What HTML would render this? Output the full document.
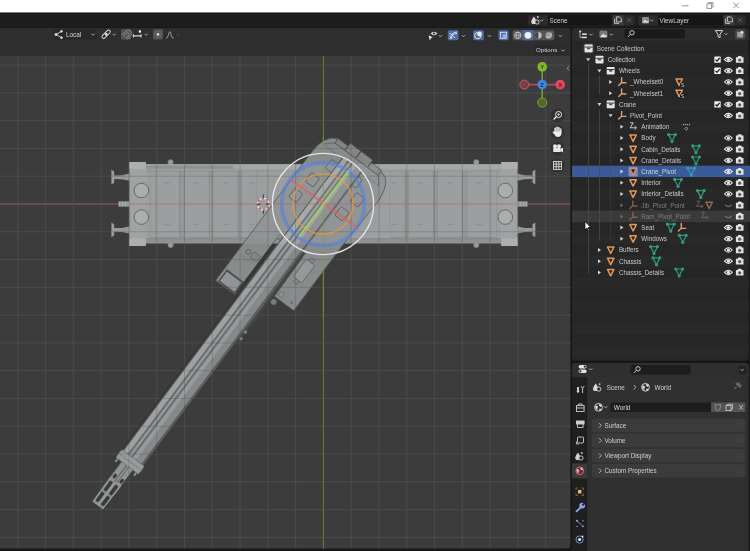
<!DOCTYPE html><html><head><meta charset="utf-8"><style>
html,body{margin:0;padding:0;background:#1a1a1a;overflow:hidden}
svg{display:block;will-change:transform}
text{font-family:"Liberation Sans", sans-serif;}
</style></head><body>
<svg width="750" height="551" viewBox="0 0 750 551">
<rect x="0" y="0" width="750" height="13" fill="#ffffff"/>
<rect x="0" y="12.5" width="750" height="1.2" fill="#0c0c0c"/>
<g stroke="#8a8a8a" stroke-width="0.9" fill="none"><line x1="682" y1="5.8" x2="688.5" y2="5.8"/><rect x="707" y="3.8" width="4.6" height="4.6"/><path d="M708.5 3.8 V2.6 H713 V7 H711.6"/><line x1="733.3" y1="2.6" x2="738.8" y2="8.2"/><line x1="738.8" y1="2.6" x2="733.3" y2="8.2"/></g>
<rect x="0" y="13.5" width="750" height="14.5" fill="#1d1d1d"/>
<rect x="0" y="27" width="750" height="1" fill="#161616"/>
<rect x="528" y="15.2" width="106.5" height="10.2" rx="2" fill="#2b2b2b"/>
<rect x="548" y="15.2" width="64.5" height="10.2" fill="#161616"/>
<rect x="612.5" y="15.2" width="11" height="10.2" fill="#3a3a3a"/>
<text x="549.5" y="22.6" font-size="6.4" fill="#d0d0d0" text-anchor="start" >Scene</text>
<g fill="none" stroke="#d0d0d0" stroke-width="0.9"><path d="M614.6 18.6 V23.4 H619.0"/><path d="M616.4 16.9 H619.6 L621.4 18.7 V21.9 H616.4 Z"/></g>
<g stroke="#6a6a6a" stroke-width="0.8"><line x1="626.8" y1="18" x2="631.2" y2="22.4"/><line x1="631.2" y1="18" x2="626.8" y2="22.4"/></g>
<path d="M540 19.6 l1.6 1.6 l1.6 -1.6" stroke="#c8c8c8" stroke-width="0.8" fill="none"/>
<g><path d="M534.0 16.4 q-2.8 3.4 -2.8 5 a2.6 2.6 0 0 0 5.2 0 q0 -1.6 -2.4 -5z" fill="#d8d8d8"/><circle cx="537.0" cy="22.0" r="2.1" fill="#2b2b2b" stroke="#d8d8d8" stroke-width="0.9"/><circle cx="537.8000000000001" cy="17.0" r="0.9" fill="#d8d8d8"/></g>
<rect x="638" y="15.2" width="107.5" height="10.2" rx="2" fill="#2b2b2b"/>
<rect x="658" y="15.2" width="65.5" height="10.2" fill="#161616"/>
<rect x="723.5" y="15.2" width="11" height="10.2" fill="#3a3a3a"/>
<text x="659.5" y="22.6" font-size="6.4" fill="#d0d0d0" text-anchor="start" >ViewLayer</text>
<g fill="none" stroke="#d0d0d0" stroke-width="0.9"><path d="M725.6 18.6 V23.4 H730.0"/><path d="M727.4 16.9 H730.6 L732.4 18.7 V21.9 H727.4 Z"/></g>
<g stroke="#6a6a6a" stroke-width="0.8"><line x1="737.8" y1="18" x2="742.2" y2="22.4"/><line x1="742.2" y1="18" x2="737.8" y2="22.4"/></g>
<path d="M650 19.6 l1.6 1.6 l1.6 -1.6" stroke="#c8c8c8" stroke-width="0.8" fill="none"/>
<g><rect x="642" y="17" width="7" height="6.5" rx="1" fill="#8a8a8a"/><path d="M642.5 22.5 l2.5 -3 l2 2 l1.5 -1 v2 z" fill="#e0e0e0"/></g>
<rect x="0" y="27" width="750" height="524" fill="#181818"/>
<rect x="-4" y="28" width="574.3" height="520.5" rx="3.5" fill="#3c3c3c"/>
<g stroke="#505050" stroke-width="1"><line x1="17.82" y1="56" x2="17.82" y2="548.5"/><line x1="45.60" y1="56" x2="45.60" y2="548.5"/><line x1="73.38" y1="56" x2="73.38" y2="548.5"/><line x1="101.16" y1="56" x2="101.16" y2="548.5"/><line x1="128.94" y1="56" x2="128.94" y2="548.5"/><line x1="156.72" y1="56" x2="156.72" y2="548.5"/><line x1="184.50" y1="56" x2="184.50" y2="548.5"/><line x1="212.28" y1="56" x2="212.28" y2="548.5"/><line x1="240.06" y1="56" x2="240.06" y2="548.5"/><line x1="267.84" y1="56" x2="267.84" y2="548.5"/><line x1="295.62" y1="56" x2="295.62" y2="548.5"/><line x1="351.18" y1="56" x2="351.18" y2="548.5"/><line x1="378.96" y1="56" x2="378.96" y2="548.5"/><line x1="406.74" y1="56" x2="406.74" y2="548.5"/><line x1="434.52" y1="56" x2="434.52" y2="548.5"/><line x1="462.30" y1="56" x2="462.30" y2="548.5"/><line x1="490.08" y1="56" x2="490.08" y2="548.5"/><line x1="517.86" y1="56" x2="517.86" y2="548.5"/><line x1="545.64" y1="56" x2="545.64" y2="548.5"/><line x1="0" y1="65.10" x2="570.5" y2="65.10"/><line x1="0" y1="92.88" x2="570.5" y2="92.88"/><line x1="0" y1="120.66" x2="570.5" y2="120.66"/><line x1="0" y1="148.44" x2="570.5" y2="148.44"/><line x1="0" y1="176.22" x2="570.5" y2="176.22"/><line x1="0" y1="231.78" x2="570.5" y2="231.78"/><line x1="0" y1="259.56" x2="570.5" y2="259.56"/><line x1="0" y1="287.34" x2="570.5" y2="287.34"/><line x1="0" y1="315.12" x2="570.5" y2="315.12"/><line x1="0" y1="342.90" x2="570.5" y2="342.90"/><line x1="0" y1="370.68" x2="570.5" y2="370.68"/><line x1="0" y1="398.46" x2="570.5" y2="398.46"/><line x1="0" y1="426.24" x2="570.5" y2="426.24"/><line x1="0" y1="454.02" x2="570.5" y2="454.02"/><line x1="0" y1="481.80" x2="570.5" y2="481.80"/><line x1="0" y1="509.58" x2="570.5" y2="509.58"/><line x1="0" y1="537.36" x2="570.5" y2="537.36"/></g>
<line x1="0" y1="204" x2="570.5" y2="204" stroke="#a05460" stroke-width="1.1"/>
<line x1="323.4" y1="56" x2="323.4" y2="548.5" stroke="#647e2c" stroke-width="1.1"/>
<g><path d="M129.5 173.6 L122 175.2 L114 175.39999999999998 L114 179.0 L122 179.2 L129.5 180.79999999999998 Z" fill="#969999"/><path d="M111.4 169.79999999999998 L114.2 171.6 L114.2 182.79999999999998 L111.4 184.6 Z" fill="#9a9d9d"/><path d="M517 173.6 L524.5 175.2 L532.5 175.39999999999998 L532.5 179.0 L524.5 179.2 L517 180.79999999999998 Z" fill="#969999"/><path d="M535.3 169.79999999999998 L532.5 171.6 L532.5 182.79999999999998 L535.3 184.6 Z" fill="#9a9d9d"/><path d="M129.5 226.3 L122 227.9 L114 228.1 L114 231.70000000000002 L122 231.9 L129.5 233.5 Z" fill="#969999"/><path d="M111.4 222.5 L114.2 224.3 L114.2 235.5 L111.4 237.3 Z" fill="#9a9d9d"/><path d="M517 226.3 L524.5 227.9 L532.5 228.1 L532.5 231.70000000000002 L524.5 231.9 L517 233.5 Z" fill="#969999"/><path d="M535.3 222.5 L532.5 224.3 L532.5 235.5 L535.3 237.3 Z" fill="#9a9d9d"/><rect x="118.5" y="201.4" width="11" height="5.2" fill="#a8aaaa"/><g stroke="#6a6a6a" stroke-width="0.5"><line x1="121" y1="201.4" x2="121" y2="206.6"/><line x1="124" y1="201.4" x2="124" y2="206.6"/><line x1="127" y1="201.4" x2="127" y2="206.6"/></g><rect x="516.5" y="201.4" width="11" height="5.2" fill="#a8aaaa"/><g stroke="#6a6a6a" stroke-width="0.5"><line x1="519" y1="201.4" x2="519" y2="206.6"/><line x1="522" y1="201.4" x2="522" y2="206.6"/><line x1="525" y1="201.4" x2="525" y2="206.6"/></g><circle cx="170.6" cy="162.3" r="2.7" fill="#9a9c9c" stroke="#727474" stroke-width="0.6"/><circle cx="170.6" cy="245" r="2.7" fill="#9a9c9c" stroke="#727474" stroke-width="0.6"/><circle cx="476.3" cy="162.3" r="2.7" fill="#9a9c9c" stroke="#727474" stroke-width="0.6"/><circle cx="476.3" cy="245" r="2.7" fill="#9a9c9c" stroke="#727474" stroke-width="0.6"/><rect x="144" y="164.3" width="358" height="79" fill="#9da0a0"/><rect x="144" y="164.3" width="358" height="4.6" fill="#a5a8a8"/><rect x="145" y="165.4" width="88" height="3.4" fill="#8f9292"/><rect x="150" y="171.5" width="340" height="63" fill="#9c9f9f"/><rect x="144" y="238.5" width="358" height="4.8" fill="#8f9292"/><rect x="129.3" y="162" width="16.4" height="84" fill="#a0a3a3"/><rect x="129.3" y="162" width="16.4" height="7" fill="#acafaf"/><rect x="129.3" y="238.5" width="16.4" height="7.5" fill="#acafaf"/><rect x="501.3" y="162" width="16.4" height="84" fill="#a0a3a3"/><rect x="501.3" y="162" width="16.4" height="7" fill="#acafaf"/><rect x="501.3" y="238.5" width="16.4" height="7.5" fill="#acafaf"/><rect x="179.6" y="171" width="4.599999999999994" height="66.4" fill="#959898"/><line x1="179.6" y1="171" x2="179.6" y2="237.4" stroke="#828585" stroke-width="0.7"/><line x1="184.2" y1="171" x2="184.2" y2="237.4" stroke="#868989" stroke-width="0.6"/><rect x="462.40000000000003" y="171" width="4.599999999999966" height="66.4" fill="#959898"/><line x1="462.40000000000003" y1="171" x2="462.40000000000003" y2="237.4" stroke="#828585" stroke-width="0.7"/><line x1="467.0" y1="171" x2="467.0" y2="237.4" stroke="#868989" stroke-width="0.6"/><rect x="209.4" y="171" width="3.5999999999999943" height="66.4" fill="#959898"/><line x1="209.4" y1="171" x2="209.4" y2="237.4" stroke="#828585" stroke-width="0.7"/><line x1="213" y1="171" x2="213" y2="237.4" stroke="#868989" stroke-width="0.6"/><rect x="433.6" y="171" width="3.6000000000000227" height="66.4" fill="#959898"/><line x1="433.6" y1="171" x2="433.6" y2="237.4" stroke="#828585" stroke-width="0.7"/><line x1="437.20000000000005" y1="171" x2="437.20000000000005" y2="237.4" stroke="#868989" stroke-width="0.6"/><rect x="238.2" y="171" width="3.4000000000000057" height="66.4" fill="#959898"/><line x1="238.2" y1="171" x2="238.2" y2="237.4" stroke="#828585" stroke-width="0.7"/><line x1="241.6" y1="171" x2="241.6" y2="237.4" stroke="#868989" stroke-width="0.6"/><rect x="405.0" y="171" width="3.400000000000034" height="66.4" fill="#959898"/><line x1="405.0" y1="171" x2="405.0" y2="237.4" stroke="#828585" stroke-width="0.7"/><line x1="408.40000000000003" y1="171" x2="408.40000000000003" y2="237.4" stroke="#868989" stroke-width="0.6"/><line x1="150" y1="171" x2="150" y2="237.4" stroke="#8e9191" stroke-width="0.6"/><line x1="155.2" y1="171" x2="155.2" y2="237.4" stroke="#8e9191" stroke-width="0.6"/><line x1="256.5" y1="171" x2="256.5" y2="237.4" stroke="#8e9191" stroke-width="0.6"/><line x1="390" y1="171" x2="390" y2="237.4" stroke="#8e9191" stroke-width="0.6"/><line x1="491.4" y1="171" x2="491.4" y2="237.4" stroke="#8e9191" stroke-width="0.6"/><line x1="496.6" y1="171" x2="496.6" y2="237.4" stroke="#8e9191" stroke-width="0.6"/><line x1="150" y1="237.4" x2="256.5" y2="237.4" stroke="#858888" stroke-width="0.7"/><line x1="390" y1="237.4" x2="496.6" y2="237.4" stroke="#858888" stroke-width="0.7"/><line x1="146" y1="171.2" x2="500" y2="171.2" stroke="#858888" stroke-width="0.6"/><line x1="146" y1="238.8" x2="500" y2="238.8" stroke="#7f8282" stroke-width="0.7"/><line x1="164" y1="183" x2="170" y2="183" stroke="#858888" stroke-width="0.6"/><line x1="164" y1="224.6" x2="170" y2="224.6" stroke="#858888" stroke-width="0.6"/><line x1="193" y1="183" x2="199" y2="183" stroke="#858888" stroke-width="0.6"/><line x1="193" y1="224.6" x2="199" y2="224.6" stroke="#858888" stroke-width="0.6"/><line x1="223" y1="183" x2="229" y2="183" stroke="#858888" stroke-width="0.6"/><line x1="223" y1="224.6" x2="229" y2="224.6" stroke="#858888" stroke-width="0.6"/><line x1="249" y1="183" x2="255" y2="183" stroke="#858888" stroke-width="0.6"/><line x1="249" y1="224.6" x2="255" y2="224.6" stroke="#858888" stroke-width="0.6"/><line x1="391" y1="183" x2="397" y2="183" stroke="#858888" stroke-width="0.6"/><line x1="391" y1="224.6" x2="397" y2="224.6" stroke="#858888" stroke-width="0.6"/><line x1="417" y1="183" x2="423" y2="183" stroke="#858888" stroke-width="0.6"/><line x1="417" y1="224.6" x2="423" y2="224.6" stroke="#858888" stroke-width="0.6"/><line x1="447" y1="183" x2="453" y2="183" stroke="#858888" stroke-width="0.6"/><line x1="447" y1="224.6" x2="453" y2="224.6" stroke="#858888" stroke-width="0.6"/><line x1="476" y1="183" x2="482" y2="183" stroke="#858888" stroke-width="0.6"/><line x1="476" y1="224.6" x2="482" y2="224.6" stroke="#858888" stroke-width="0.6"/><circle cx="141.4" cy="190.5" r="7.3" fill="#abaeae" stroke="#606262" stroke-width="0.9"/><circle cx="141.4" cy="217.1" r="7.3" fill="#abaeae" stroke="#606262" stroke-width="0.9"/><circle cx="505.3" cy="190.5" r="7.3" fill="#abaeae" stroke="#606262" stroke-width="0.9"/><circle cx="505.3" cy="217.1" r="7.3" fill="#abaeae" stroke="#606262" stroke-width="0.9"/></g>
<g transform="translate(323,204) rotate(-53.15)"><g opacity="0.9"><path d="M-125.5 -40 L30 -40.3 Q57 -41 61 -27 L60 30 Q59 40 37 42.6 L-18 40.4 L-103 40.6 L-103 16.5 L-55 15.5 L-55 -16.5 L-125 -16.5 Z" fill="#909494" stroke="#585b5b" stroke-width="0.9"/><rect x="56" y="-27" width="5.5" height="12" fill="#8c8e8e" stroke="#4e5050" stroke-width="0.8"/><rect x="56" y="-14.5" width="9" height="13.0" fill="#8c8e8e" stroke="#4e5050" stroke-width="0.8"/><rect x="56" y="-1" width="9" height="14.5" fill="#8c8e8e" stroke="#4e5050" stroke-width="0.8"/><rect x="56" y="14" width="6" height="13" fill="#8c8e8e" stroke="#4e5050" stroke-width="0.8"/><path d="M48 -36 L56 -27 M48 34 L56 27" stroke="#5e6060" stroke-width="0.7" fill="none"/><line x1="48" y1="-36" x2="48" y2="34" stroke="#6a6c6c" stroke-width="0.6"/><path d="M-124 -37 L-111 -37 L-111 -17.5 L-124 -17.5 Z" fill="#9a9e9e" stroke="#404343" stroke-width="1.1"/><line x1="-110" y1="-38.6" x2="-110" y2="-16.5" stroke="#5a5c5c" stroke-width="0.8"/><circle cx="-83" cy="-31" r="2.6" fill="#8e9090" stroke="#5e6060" stroke-width="0.7"/><rect x="-86.5" y="-26.5" width="7" height="8" rx="1" fill="#8e9090" stroke="#5e6060" stroke-width="0.7"/><line x1="-90" y1="-36" x2="-90" y2="-18" stroke="#7a7c7c" stroke-width="0.5"/><rect x="-76" y="19.8" width="22" height="10.6" rx="2.2" fill="#a0a4a4" stroke="#5e6262" stroke-width="0.7"/><rect x="-80" y="22.5" width="4" height="5" fill="#8e9090" stroke="#5e6060" stroke-width="0.6"/><rect x="-54" y="22.5" width="4" height="5" fill="#8e9090" stroke="#5e6060" stroke-width="0.6"/><rect x="-100" y="19" width="5" height="4" fill="#9a9c9c" stroke="#5e6060" stroke-width="0.6"/><circle cx="-98" cy="34" r="1.2" fill="#6a6c6c"/><rect x="-15.0" y="-32" width="11" height="10" rx="1.5" fill="#929494" stroke="#5a5c5c" stroke-width="0.9"/><rect x="7.5" y="-28" width="11" height="10" rx="1.5" fill="#929494" stroke="#5a5c5c" stroke-width="0.9"/><rect x="30.1" y="-20" width="11" height="10" rx="1.5" fill="#929494" stroke="#5a5c5c" stroke-width="0.9"/><rect x="-2.0" y="16" width="11" height="10" rx="1.5" fill="#929494" stroke="#5a5c5c" stroke-width="0.9"/><rect x="18.5" y="20" width="11" height="10" rx="1.5" fill="#929494" stroke="#5a5c5c" stroke-width="0.9"/><rect x="32.1" y="7" width="11" height="10" rx="1.5" fill="#929494" stroke="#5a5c5c" stroke-width="0.9"/><rect x="-122" y="-16.5" width="60" height="4" fill="#363737"/><rect x="-157" y="12.5" width="107" height="3.2" fill="#474848"/><circle cx="-52" cy="-14.8" r="2.2" fill="#8a8c8c" stroke="#5a5c5c" stroke-width="0.5"/><rect x="-318" y="-12.5" width="368" height="25" fill="#959999"/><rect x="-318" y="-12.5" width="368" height="1.2" fill="#545757"/><rect x="-318" y="-11.3" width="368" height="5" fill="#a8acac"/><rect x="-318" y="-6.3" width="368" height="2" fill="#6c7070"/><rect x="-318" y="-4.5" width="368" height="2.4" fill="#9da1a1"/><rect x="-318" y="-1.9" width="368" height="1.9" fill="#6c7070"/><rect x="-318" y="-0.1" width="368" height="4" fill="#a2a6a6"/><rect x="-318" y="3.9" width="368" height="6.6" fill="#8e9292"/><rect x="-318" y="10.5" width="368" height="2" fill="#606363"/><circle cx="-108" cy="19.3" r="3" fill="#7e8282" stroke="#5a5c5c" stroke-width="0.5"/><circle cx="-149" cy="14.8" r="1.6" fill="#8a8c8c"/><circle cx="-157" cy="15.2" r="1.6" fill="#8a8c8c"/><rect x="-318" y="-14.3" width="196" height="1.8" fill="#2e3030" opacity="0.55"/><path d="M-327 -13.6 Q-322 -14.6 -317 -13.6 L-317 14.2 Q-322 15.2 -327 14.2 Z" fill="#a2a6a6" stroke="#606464" stroke-width="0.6"/><line x1="-322" y1="-14.2" x2="-322" y2="14.8" stroke="#6e7272" stroke-width="0.6"/><rect x="-331" y="-12.6" width="4" height="2.2" rx="1" fill="#8e9292"/><rect x="-331" y="10.6" width="4" height="2.2" rx="1" fill="#8e9292"/><rect x="-347" y="-6.4" width="20" height="13.6" fill="#9a9e9e" stroke="#7a7e7e" stroke-width="0.6"/><rect x="-347" y="-1.2" width="20" height="1.4" fill="#6c7070"/><rect x="-347" y="1.6" width="20" height="1.2" fill="#6c7070"/><rect x="-345" y="-5" width="5" height="3" rx="1.2" fill="#3a3c3c"/><rect x="-345" y="3.6" width="5" height="3" rx="1.2" fill="#3a3c3c"/><path d="M-375.8 -5.6 L-347 -6.2 L-347 7.2 L-375.8 6.6 Z" fill="#8e9292" stroke="#a6aaaa" stroke-width="1"/><rect x="-375.8" y="-0.2" width="29" height="1.6" fill="#a6aaaa"/><rect x="-373.6" y="-4.4" width="11" height="3.4" rx="1" fill="#383a3a"/><rect x="-373.6" y="2.2" width="11" height="3.6" rx="1" fill="#383a3a"/><rect x="-360.4" y="-4.4" width="11.6" height="3.4" rx="1" fill="#383a3a"/><rect x="-360.4" y="2.2" width="11.6" height="3.6" rx="1" fill="#383a3a"/></g></g>
<g stroke="#3a3a3a" stroke-width="1" opacity="0.24"><line x1="17.82" y1="56" x2="17.82" y2="548.5"/><line x1="45.60" y1="56" x2="45.60" y2="548.5"/><line x1="73.38" y1="56" x2="73.38" y2="548.5"/><line x1="101.16" y1="56" x2="101.16" y2="548.5"/><line x1="128.94" y1="56" x2="128.94" y2="548.5"/><line x1="156.72" y1="56" x2="156.72" y2="548.5"/><line x1="184.50" y1="56" x2="184.50" y2="548.5"/><line x1="212.28" y1="56" x2="212.28" y2="548.5"/><line x1="240.06" y1="56" x2="240.06" y2="548.5"/><line x1="267.84" y1="56" x2="267.84" y2="548.5"/><line x1="295.62" y1="56" x2="295.62" y2="548.5"/><line x1="351.18" y1="56" x2="351.18" y2="548.5"/><line x1="378.96" y1="56" x2="378.96" y2="548.5"/><line x1="406.74" y1="56" x2="406.74" y2="548.5"/><line x1="434.52" y1="56" x2="434.52" y2="548.5"/><line x1="462.30" y1="56" x2="462.30" y2="548.5"/><line x1="490.08" y1="56" x2="490.08" y2="548.5"/><line x1="517.86" y1="56" x2="517.86" y2="548.5"/><line x1="545.64" y1="56" x2="545.64" y2="548.5"/><line x1="0" y1="65.10" x2="570.5" y2="65.10"/><line x1="0" y1="92.88" x2="570.5" y2="92.88"/><line x1="0" y1="120.66" x2="570.5" y2="120.66"/><line x1="0" y1="148.44" x2="570.5" y2="148.44"/><line x1="0" y1="176.22" x2="570.5" y2="176.22"/><line x1="0" y1="231.78" x2="570.5" y2="231.78"/><line x1="0" y1="259.56" x2="570.5" y2="259.56"/><line x1="0" y1="287.34" x2="570.5" y2="287.34"/><line x1="0" y1="315.12" x2="570.5" y2="315.12"/><line x1="0" y1="342.90" x2="570.5" y2="342.90"/><line x1="0" y1="370.68" x2="570.5" y2="370.68"/><line x1="0" y1="398.46" x2="570.5" y2="398.46"/><line x1="0" y1="426.24" x2="570.5" y2="426.24"/><line x1="0" y1="454.02" x2="570.5" y2="454.02"/><line x1="0" y1="481.80" x2="570.5" y2="481.80"/><line x1="0" y1="509.58" x2="570.5" y2="509.58"/><line x1="0" y1="537.36" x2="570.5" y2="537.36"/></g>
<line x1="129" y1="204" x2="517.5" y2="204" stroke="#b85a66" stroke-width="1.1" opacity="0.6"/>
<line x1="323.4" y1="136" x2="323.4" y2="318" stroke="#7f9a3a" stroke-width="1" opacity="0.6"/>
<g><circle cx="263.3" cy="204.2" r="5.8" fill="none" stroke="#f2e6e6" stroke-width="1.3" stroke-dasharray="2.3 2.25"/><circle cx="263.3" cy="204.2" r="5.8" fill="none" stroke="#c86a6a" stroke-width="1.3" stroke-dasharray="2.25 2.3" stroke-dashoffset="2.3"/><line x1="263.3" y1="194.5" x2="263.3" y2="198" stroke="#2a2a2a" stroke-width="0.9"/><line x1="263.3" y1="210.4" x2="263.3" y2="214" stroke="#2a2a2a" stroke-width="0.9"/><line x1="257" y1="204.2" x2="260.5" y2="204.2" stroke="#3a2a2a" stroke-width="0.9"/><line x1="266.1" y1="204.2" x2="269.6" y2="204.2" stroke="#3a2a2a" stroke-width="0.9"/></g>
<g fill="none"><circle cx="323" cy="204" r="50.6" stroke="#e4e4e4" stroke-width="1.4"/><circle cx="323" cy="204" r="41.4" stroke="#4f80e8" stroke-width="3.6" opacity="0.55"/><circle cx="323" cy="204" r="30" stroke="#f29a30" stroke-width="1.6" opacity="0.65"/><line x1="290.6" y1="179.6" x2="356.8" y2="227.5" stroke="#d8606e" stroke-width="2.6" opacity="0.6"/><line x1="298.8" y1="236.8" x2="348.6" y2="170.6" stroke="#a8dc60" stroke-width="2.6" opacity="0.62"/></g>
<path d="M0 28 H566.8 q3.5 0 3.5 3.5 V56 H0z" fill="#2e2e2e"/>
<rect x="53.5" y="29.2" width="43" height="10.6" rx="2" fill="#282828"/>
<g stroke="#d6d6d6" stroke-width="0.9" fill="#d6d6d6"><line x1="56" y1="34.5" x2="61.5" y2="31.3"/><line x1="56" y1="34.5" x2="61.5" y2="37.7"/><circle cx="56" cy="34.5" r="1.1"/><circle cx="61.5" cy="31.3" r="0.9"/><circle cx="61.5" cy="37.7" r="0.9"/></g>
<text x="66" y="37.0" font-size="6.4" fill="#d6d6d6" text-anchor="start" >Local</text>
<path d="M91.6 33.7 l1.6 1.6 l1.6 -1.6" stroke="#c8c8c8" stroke-width="0.8" fill="none"/>
<g fill="none" stroke="#d6d6d6" stroke-width="1"><rect x="101.6" y="34" width="6" height="3.4" rx="1.7" transform="rotate(-45 104.6 35.7)"/><rect x="104.6" y="31" width="6" height="3.4" rx="1.7" transform="rotate(-45 107.6 32.7)"/></g><circle cx="106.1" cy="34.2" r="0.8" fill="#ffffff"/>
<path d="M112.6 33.8 l1.6 1.6 l1.6 -1.6" stroke="#c8c8c8" stroke-width="0.8" fill="none"/>
<rect x="121" y="29.3" width="10" height="10.2" rx="1.5" fill="#555555"/>
<path d="M123.6 37.6 l2.6 -2.6 a1.6 1.6 0 0 1 2.3 2.3 l-2.6 2.6 M122.4 36.4 l3.8 -3.8 a3.3 3.3 0 0 1 4.7 4.7 l-3.8 3.8" stroke="#8e8e8e" stroke-width="0.9" fill="none" transform="translate(0,-1.6)"/>
<g stroke="#d6d6d6" stroke-width="1.1" fill="none"><path d="M133.4 34.2 v3.4 M133.4 35.9 h7.6 M141 34.2 v3.4"/></g><rect x="138.8" y="30.4" width="2.2" height="2.2" fill="#ffffff"/>
<path d="M144.6 33.8 l1.6 1.6 l1.6 -1.6" stroke="#c8c8c8" stroke-width="0.8" fill="none"/>
<rect x="153" y="29.3" width="10" height="10.2" rx="1.5" fill="#555555"/>
<circle cx="158" cy="34.4" r="3.2" fill="none" stroke="#7c7c7c" stroke-width="0.8" stroke-dasharray="1 0.6"/><circle cx="158" cy="34.4" r="1.3" fill="#e0e0e0"/>
<path d="M165.8 38.6 q2 -0.6 2.8 -4 q0.5 -3 1.2 -3 q0.7 0 1.2 3 q0.8 3.4 2.8 4" stroke="#a8a8a8" stroke-width="0.9" fill="none"/>
<path d="M176.6 33.8 l1.6 1.6 l1.6 -1.6" stroke="#555" stroke-width="0.8" fill="none"/>
<g><path d="M430.5 33.6 q3.5 -3.6 7 0 q-3.5 3.6 -7 0z" fill="#dcdcdc"/><circle cx="434" cy="33.6" r="1.1" fill="#2e2e2e"/><path d="M428.6 35.2 l4.2 2.2 l-1.8 0.6 l-1.2 2.4z" fill="#f0f0f0"/></g>
<path d="M438.8 35.2 l1.6 1.6 l1.6 -1.6" stroke="#c8c8c8" stroke-width="0.8" fill="none"/>
<rect x="447.8" y="30.3" width="10.6" height="10" rx="1.5" fill="#4e6ea8"/>
<path d="M450 39 a7 7 0 0 1 7 -7 M451.5 39 a5 5 0 0 1 5.5 -5.5 M449.8 33 l5 5" stroke="#e8e8e8" stroke-width="0.9" fill="none"/>
<path d="M461.8 35.2 l1.6 1.6 l1.6 -1.6" stroke="#c8c8c8" stroke-width="0.8" fill="none"/>
<rect x="473.2" y="30.3" width="10.6" height="10" rx="1.5" fill="#4e6ea8"/>
<circle cx="477.8" cy="35.6" r="3.2" fill="none" stroke="#e8e8e8" stroke-width="0.9"/><circle cx="479.5" cy="34" r="2.4" fill="#e8e8e8"/>
<path d="M487.8 35.2 l1.6 1.6 l1.6 -1.6" stroke="#c8c8c8" stroke-width="0.8" fill="none"/>
<rect x="498.4" y="30.3" width="10.2" height="10" rx="1.5" fill="#4e6ea8"/>
<rect x="500.5" y="32.3" width="6" height="6" fill="none" stroke="#e8e8e8" stroke-width="0.8"/><rect x="502.5" y="34.3" width="4" height="4" fill="#8fb0e0"/>
<rect x="512.6" y="30.3" width="41.8" height="10" rx="2" fill="#545454"/>
<rect x="522.8" y="30.3" width="10.4" height="10" fill="#4e6ea8"/>
<circle cx="517.8" cy="35.3" r="3.2" fill="none" stroke="#d8d8d8" stroke-width="0.8"/><line x1="514.6" y1="35.3" x2="521" y2="35.3" stroke="#d8d8d8" stroke-width="0.6"/><ellipse cx="517.8" cy="35.3" rx="1.3" ry="3.2" fill="none" stroke="#d8d8d8" stroke-width="0.6"/>
<circle cx="528" cy="35.3" r="3.4" fill="#f2f2f2"/>
<circle cx="538.3" cy="35.3" r="3.4" fill="#bdbdbd"/><path d="M538.3 31.9 a3.4 3.4 0 0 0 0 6.8z" fill="#444"/>
<circle cx="548.8" cy="35.3" r="3.4" fill="#9a9a9a"/><path d="M546 37 a3.4 3.4 0 0 0 5 -3.6" fill="none" stroke="#e0e0e0" stroke-width="0.8"/>
<path d="M558.8 35.2 l1.6 1.6 l1.6 -1.6" stroke="#c8c8c8" stroke-width="0.8" fill="none"/>
<rect x="533.5" y="45" width="33" height="10" rx="2" fill="#2a2a2a"/>
<text x="536" y="52.4" font-size="6.2" fill="#d0d0d0" text-anchor="start" >Options</text>
<path d="M561.5 49.6 l1.6 1.6 l1.6 -1.6" stroke="#c8c8c8" stroke-width="0.8" fill="none"/>
<g><line x1="542.2" y1="66.8" x2="542.2" y2="102.6" stroke="#71a02a" stroke-width="1.6"/><line x1="524.3" y1="84.6" x2="560.2" y2="84.6" stroke="#b84a5a" stroke-width="1.6"/><circle cx="524.3" cy="84.6" r="4.5" fill="#7a3e4a" stroke="#c25a6c" stroke-width="1"/><circle cx="542.2" cy="102.6" r="4.5" fill="#4e6a26" stroke="#7ca63a" stroke-width="1"/><circle cx="560.2" cy="84.6" r="4.8" fill="#df4a5e"/><circle cx="542.2" cy="66.8" r="4.8" fill="#7fb92a"/><circle cx="542.2" cy="84.6" r="4.8" fill="#3f86e0"/></g>
<g font-size="5.4" font-weight="bold" text-anchor="middle"><text x="542.2" y="68.8" fill="#2a3a10">Y</text><text x="560.2" y="86.6" fill="#5a1520">X</text><text x="542.2" y="86.6" fill="#10305a">Z</text></g>
<path d="M569 66.4 l-1.8 2 l1.8 2" stroke="#bdbdbd" stroke-width="0.8" fill="none"/>
<circle cx="557.5" cy="115.6" r="7" fill="#2f2f2f" opacity="0.85"/>
<circle cx="557.5" cy="132.2" r="7" fill="#2f2f2f" opacity="0.85"/>
<circle cx="557.5" cy="148.8" r="7" fill="#2f2f2f" opacity="0.85"/>
<circle cx="557.5" cy="165.4" r="7" fill="#2f2f2f" opacity="0.85"/>
<g fill="none" stroke="#e8e8e8" stroke-width="1"><circle cx="558.6" cy="114.5" r="3"/><line x1="556.5" y1="116.6" x2="553.6" y2="119.5" stroke-width="1.4"/><path d="M557.2 114.5 h2.8 M558.6 113.1 v2.8" stroke-width="0.7"/></g>
<g fill="#ececec"><rect x="554.4" y="127.6" width="1.5" height="5" rx="0.75"/><rect x="556.3" y="126.6" width="1.5" height="5.5" rx="0.75"/><rect x="558.2" y="127" width="1.5" height="5.5" rx="0.75"/><rect x="560.1" y="128.2" width="1.4" height="4.5" rx="0.7"/><path d="M554.4 131.5 h7.1 v2.2 q-0.5 3 -3.6 3.2 q-2.4 0 -3.2 -2.2 l-2.4 -2.6 q0.4 -1 1.6 -0.4z"/></g>
<g fill="#e8e8e8"><circle cx="555" cy="146.2" r="2"/><circle cx="559" cy="146.2" r="2"/><rect x="553.2" y="148" width="7.5" height="4" rx="0.6"/><path d="M560.5 149 l2.5 -1.5 v5 l-2.5 -1.5z"/></g>
<g fill="none" stroke="#e8e8e8" stroke-width="0.8"><rect x="553.5" y="161.4" width="8" height="8"/><path d="M556.2 161.4 v8 M558.8 161.4 v8 M553.5 164.1 h8 M553.5 166.7 h8"/></g>
<rect x="572" y="28" width="176.6" height="332.8" rx="3.5" fill="#262626"/>
<rect x="572" y="54.0" width="176.6" height="11.2" fill="#292929"/>
<rect x="572" y="76.4" width="176.6" height="11.2" fill="#292929"/>
<rect x="572" y="98.8" width="176.6" height="11.2" fill="#292929"/>
<rect x="572" y="121.2" width="176.6" height="11.2" fill="#292929"/>
<rect x="572" y="143.6" width="176.6" height="11.2" fill="#292929"/>
<rect x="572" y="166.0" width="176.6" height="11.2" fill="#292929"/>
<rect x="572" y="188.4" width="176.6" height="11.2" fill="#292929"/>
<rect x="572" y="210.8" width="176.6" height="11.2" fill="#292929"/>
<rect x="572" y="233.2" width="176.6" height="11.2" fill="#292929"/>
<rect x="572" y="255.6" width="176.6" height="11.2" fill="#292929"/>
<rect x="572" y="278.0" width="176.6" height="11.2" fill="#292929"/>
<rect x="572" y="300.4" width="176.6" height="11.2" fill="#292929"/>
<rect x="572" y="322.8" width="176.6" height="11.2" fill="#292929"/>
<rect x="572" y="345.2" width="176.6" height="11.2" fill="#292929"/>
<path d="M572 31.5 q0 -3.5 3.5 -3.5 H745.1 q3.5 0 3.5 3.5 V40.8 H572z" fill="#2c2c2c"/>
<g fill="#d8d8d8"><rect x="579.2" y="30.6" width="2" height="1.6"/><rect x="582" y="33.4" width="4.8" height="1.6"/><rect x="582" y="36.6" width="4.8" height="1.6"/><path d="M580 32 v5.4 h2" stroke="#d8d8d8" stroke-width="0.7" fill="none"/></g>
<path d="M589.6 33.8 l1.5 1.5 l1.5 -1.5" stroke="#c8c8c8" stroke-width="0.8" fill="none"/>
<rect x="599.4" y="30.6" width="8" height="7.4" rx="1.5" fill="#777"/><path d="M600.2 37 l3 -3.6 l2 2 l1.4 -1 v2.6z" fill="#e0e0e0"/>
<path d="M609.8 33.8 l1.5 1.5 l1.5 -1.5" stroke="#c8c8c8" stroke-width="0.8" fill="none"/>
<rect x="624.5" y="29" width="60.5" height="9.6" rx="2" fill="#1a1a1a"/>
<g fill="none" stroke="#d8d8d8" stroke-width="0.9"><circle cx="632" cy="32.8" r="2.2"/><line x1="630.4" y1="34.4" x2="627.8" y2="37"/></g>
<path d="M715.3 30.6 h7.4 l-2.7 3.6 v3.6 l-2 -1.2 v-2.4z" fill="none" stroke="#d8d8d8" stroke-width="1"/>
<path d="M724.4 33.3 l1.5 1.5 l1.5 -1.5" stroke="#c8c8c8" stroke-width="0.8" fill="none"/>
<rect x="735.2" y="29.6" width="10" height="9.6" rx="1.5" fill="#4a4a4a"/><rect x="737.2" y="31.8" width="6" height="5.6" rx="0.8" fill="#9a9a9a"/><circle cx="742" cy="32.4" r="1.4" fill="#e0e0e0"/>
<rect x="572" y="165.7" width="178" height="11.4" fill="#3b5a9a"/>
<rect x="572" y="210.5" width="178" height="11.6" fill="#3a3a3a"/>
<line x1="588.5" y1="64.6" x2="588.5" y2="274.4" stroke="#4a4a4a" stroke-width="0.8"/>
<line x1="599.5" y1="75.8" x2="599.5" y2="94.2" stroke="#4a4a4a" stroke-width="0.8"/>
<line x1="599.5" y1="109.4" x2="599.5" y2="240.8" stroke="#4a4a4a" stroke-width="0.8"/>
<line x1="610.5" y1="120.6" x2="610.5" y2="240.8" stroke="#4a4a4a" stroke-width="0.8" stroke-dasharray="1.4 1.4"/>
<rect x="583.6" y="43.6" width="10" height="9.6" rx="1.5" fill="#4a4a4a"/>
<g><rect x="584.6" y="44.6" width="8" height="7.6" rx="0.8" fill="#e6e6e6"/><rect x="584.6" y="46.6" width="8" height="0.9" fill="#2a2a2a"/><rect x="587.0" y="47.5" width="3.2" height="1.8" fill="#555"/></g>
<text x="596.8000000000001" y="50.699999999999996" font-size="6.3" fill="#c9c9c9" text-anchor="start" >Scene Collection</text>
<path d="M586.2 58.199999999999996 h4 l-2 3z" fill="#d0d0d0"/>
<g><rect x="595.5" y="55.8" width="8" height="7.6" rx="0.8" fill="#e6e6e6"/><rect x="595.5" y="57.8" width="8" height="0.9" fill="#2a2a2a"/><rect x="597.9" y="58.699999999999996" width="3.2" height="1.8" fill="#555"/></g>
<text x="607.7" y="61.89999999999999" font-size="6.3" fill="#c9c9c9" text-anchor="start" >Collection</text>
<rect x="714.3" y="56.39999999999999" width="6.4" height="6.4" rx="0.6" fill="#f0f0f0"/><path d="M715.5 59.699999999999996 l1.5 1.5 l2.7 -3.2" stroke="#1a1a1a" stroke-width="1.2" fill="none"/>
<path d="M724.5 59.599999999999994 q3.9 -4.4 7.8 0 q-3.9 4.4 -7.8 0z" fill="none" stroke="#e6e6e6" stroke-width="1.1"/><circle cx="728.4" cy="59.599999999999994" r="1.6" fill="#e6e6e6"/>
<path d="M735.9000000000001 57.199999999999996 h1.6 l0.8 -1.3 h2.8 l0.8 1.3 h1.6 v5.6 h-7.6z" fill="#e2e2e2"/><circle cx="739.7" cy="59.99999999999999" r="1.6" fill="#5a5a5a"/>
<path d="M597.4 69.39999999999999 h4 l-2 3z" fill="#d0d0d0"/>
<g><rect x="606.6999999999999" y="67.0" width="8" height="7.6" rx="0.8" fill="#e6e6e6"/><rect x="606.6999999999999" y="69.0" width="8" height="0.9" fill="#2a2a2a"/><rect x="609.0999999999999" y="69.89999999999999" width="3.2" height="1.8" fill="#555"/></g>
<text x="618.9" y="73.1" font-size="6.3" fill="#c9c9c9" text-anchor="start" >Wheels</text>
<rect x="714.3" y="67.6" width="6.4" height="6.4" rx="0.6" fill="#f0f0f0"/><path d="M715.5 70.89999999999999 l1.5 1.5 l2.7 -3.2" stroke="#1a1a1a" stroke-width="1.2" fill="none"/>
<path d="M724.5 70.8 q3.9 -4.4 7.8 0 q-3.9 4.4 -7.8 0z" fill="none" stroke="#e6e6e6" stroke-width="1.1"/><circle cx="728.4" cy="70.8" r="1.6" fill="#e6e6e6"/>
<path d="M735.9000000000001 68.39999999999999 h1.6 l0.8 -1.3 h2.8 l0.8 1.3 h1.6 v5.6 h-7.6z" fill="#e2e2e2"/><circle cx="739.7" cy="71.2" r="1.6" fill="#5a5a5a"/>
<path d="M609.2 80.0 v4 l3 -2z" fill="#d8d8d8"/>
<path d="M621.6 82.6 V77.8 M621.6 82.6 L618.6999999999999 85.4 M621.6 82.6 L625.9 82.8" stroke="#dca070" stroke-width="1.4" fill="none" stroke-linecap="round"/>
<text x="630.1" y="84.3" font-size="6.3" fill="#c9c9c9" text-anchor="start" >_Wheelset0</text>
<path d="M676.0 79.0 H682.4000000000001 L679.2 85.4Z" fill="#3a2010" stroke="#d99a64" stroke-width="1.5" stroke-linejoin="round"/><circle cx="682.6" cy="84.6" r="2.6" fill="#161616"/><text x="682.6" y="86.6" font-size="5.6" fill="#d8d8d8" text-anchor="middle">S</text>
<path d="M724.5 82.0 q3.9 -4.4 7.8 0 q-3.9 4.4 -7.8 0z" fill="none" stroke="#e6e6e6" stroke-width="1.1"/><circle cx="728.4" cy="82.0" r="1.6" fill="#e6e6e6"/>
<path d="M735.9000000000001 79.6 h1.6 l0.8 -1.3 h2.8 l0.8 1.3 h1.6 v5.6 h-7.6z" fill="#e2e2e2"/><circle cx="739.7" cy="82.4" r="1.6" fill="#5a5a5a"/>
<path d="M609.2 91.19999999999999 v4 l3 -2z" fill="#d8d8d8"/>
<path d="M621.6 93.79999999999998 V88.99999999999999 M621.6 93.79999999999998 L618.6999999999999 96.6 M621.6 93.79999999999998 L625.9 93.99999999999999" stroke="#dca070" stroke-width="1.4" fill="none" stroke-linecap="round"/>
<text x="630.1" y="95.49999999999999" font-size="6.3" fill="#c9c9c9" text-anchor="start" >_Wheelset1</text>
<path d="M676.0 90.19999999999999 H682.4000000000001 L679.2 96.6Z" fill="#3a2010" stroke="#d99a64" stroke-width="1.5" stroke-linejoin="round"/><circle cx="682.6" cy="95.79999999999998" r="2.6" fill="#161616"/><text x="682.6" y="97.79999999999998" font-size="5.6" fill="#d8d8d8" text-anchor="middle">S</text>
<path d="M724.5 93.19999999999999 q3.9 -4.4 7.8 0 q-3.9 4.4 -7.8 0z" fill="none" stroke="#e6e6e6" stroke-width="1.1"/><circle cx="728.4" cy="93.19999999999999" r="1.6" fill="#e6e6e6"/>
<path d="M735.9000000000001 90.79999999999998 h1.6 l0.8 -1.3 h2.8 l0.8 1.3 h1.6 v5.6 h-7.6z" fill="#e2e2e2"/><circle cx="739.7" cy="93.6" r="1.6" fill="#5a5a5a"/>
<path d="M597.4 103.0 h4 l-2 3z" fill="#d0d0d0"/>
<g><rect x="606.6999999999999" y="100.60000000000001" width="8" height="7.6" rx="0.8" fill="#e6e6e6"/><rect x="606.6999999999999" y="102.60000000000001" width="8" height="0.9" fill="#2a2a2a"/><rect x="609.0999999999999" y="103.5" width="3.2" height="1.8" fill="#555"/></g>
<text x="618.9" y="106.7" font-size="6.3" fill="#c9c9c9" text-anchor="start" >Crane</text>
<rect x="714.3" y="101.2" width="6.4" height="6.4" rx="0.6" fill="#f0f0f0"/><path d="M715.5 104.5 l1.5 1.5 l2.7 -3.2" stroke="#1a1a1a" stroke-width="1.2" fill="none"/>
<path d="M724.5 104.4 q3.9 -4.4 7.8 0 q-3.9 4.4 -7.8 0z" fill="none" stroke="#e6e6e6" stroke-width="1.1"/><circle cx="728.4" cy="104.4" r="1.6" fill="#e6e6e6"/>
<path d="M735.9000000000001 102.0 h1.6 l0.8 -1.3 h2.8 l0.8 1.3 h1.6 v5.6 h-7.6z" fill="#e2e2e2"/><circle cx="739.7" cy="104.80000000000001" r="1.6" fill="#5a5a5a"/>
<path d="M608.6 114.19999999999999 h4 l-2 3z" fill="#d0d0d0"/>
<path d="M621.6 116.19999999999999 V111.39999999999999 M621.6 116.19999999999999 L618.6999999999999 119.0 M621.6 116.19999999999999 L625.9 116.39999999999999" stroke="#dca070" stroke-width="1.4" fill="none" stroke-linecap="round"/>
<text x="630.1" y="117.89999999999999" font-size="6.3" fill="#c9c9c9" text-anchor="start" >Pivot_Point</text>
<path d="M724.5 115.6 q3.9 -4.4 7.8 0 q-3.9 4.4 -7.8 0z" fill="none" stroke="#e6e6e6" stroke-width="1.1"/><circle cx="728.4" cy="115.6" r="1.6" fill="#e6e6e6"/>
<path d="M735.9000000000001 113.19999999999999 h1.6 l0.8 -1.3 h2.8 l0.8 1.3 h1.6 v5.6 h-7.6z" fill="#e2e2e2"/><circle cx="739.7" cy="116.0" r="1.6" fill="#5a5a5a"/>
<path d="M620.4 124.79999999999998 v4 l3 -2z" fill="#d8d8d8"/>
<path d="M630.0999999999999 122.79999999999998 h3.2 l-3.2 5 h6.2 M634.6999999999999 125.99999999999999 l1.8 1.8 l-1.8 1.8" stroke="#d8d8d8" stroke-width="0.9" fill="none" stroke-linejoin="round"/>
<text x="641.3" y="129.1" font-size="6.3" fill="#c9c9c9" text-anchor="start" >Animation</text>
<g fill="#bdbdbd"><circle cx="683.4" cy="124.59999999999998" r="0.7"/><circle cx="685.4" cy="124.59999999999998" r="0.7"/><circle cx="687.4" cy="124.59999999999998" r="0.7"/><circle cx="689.4" cy="124.59999999999998" r="0.7"/></g><path d="M686.4 126.99999999999999 l1.6 1.6 l-1.6 1.6 l-1.6 -1.6z" fill="none" stroke="#bdbdbd" stroke-width="0.7"/>
<path d="M620.4 136.0 v4 l3 -2z" fill="#d8d8d8"/>
<path d="M629.8999999999999 135.0 H636.3 L633.0999999999999 141.4Z" fill="#3a2010" stroke="#d99a64" stroke-width="1.5" stroke-linejoin="round"/>
<text x="641.3" y="140.3" font-size="6.3" fill="#c9c9c9" text-anchor="start" >Body</text>
<g stroke="#2f9c7a" stroke-width="1.2" fill="none"><path d="M668.6 134.6 L675.4 134.6 L672 141.6Z"/><circle cx="668.6" cy="134.6" r="1" fill="#2f9c7a"/><circle cx="675.4" cy="134.6" r="1" fill="#2f9c7a"/><circle cx="672" cy="141.6" r="1" fill="#2f9c7a"/></g>
<path d="M724.5 138.0 q3.9 -4.4 7.8 0 q-3.9 4.4 -7.8 0z" fill="none" stroke="#e6e6e6" stroke-width="1.1"/><circle cx="728.4" cy="138.0" r="1.6" fill="#e6e6e6"/>
<path d="M735.9000000000001 135.6 h1.6 l0.8 -1.3 h2.8 l0.8 1.3 h1.6 v5.6 h-7.6z" fill="#e2e2e2"/><circle cx="739.7" cy="138.4" r="1.6" fill="#5a5a5a"/>
<path d="M620.4 147.2 v4 l3 -2z" fill="#d8d8d8"/>
<path d="M629.8999999999999 146.2 H636.3 L633.0999999999999 152.6Z" fill="#3a2010" stroke="#d99a64" stroke-width="1.5" stroke-linejoin="round"/>
<text x="641.3" y="151.5" font-size="6.3" fill="#c9c9c9" text-anchor="start" >Cabin_Details</text>
<g stroke="#2f9c7a" stroke-width="1.2" fill="none"><path d="M692.6 145.79999999999998 L699.4 145.79999999999998 L696 152.79999999999998Z"/><circle cx="692.6" cy="145.79999999999998" r="1" fill="#2f9c7a"/><circle cx="699.4" cy="145.79999999999998" r="1" fill="#2f9c7a"/><circle cx="696" cy="152.79999999999998" r="1" fill="#2f9c7a"/></g>
<path d="M724.5 149.2 q3.9 -4.4 7.8 0 q-3.9 4.4 -7.8 0z" fill="none" stroke="#e6e6e6" stroke-width="1.1"/><circle cx="728.4" cy="149.2" r="1.6" fill="#e6e6e6"/>
<path d="M735.9000000000001 146.79999999999998 h1.6 l0.8 -1.3 h2.8 l0.8 1.3 h1.6 v5.6 h-7.6z" fill="#e2e2e2"/><circle cx="739.7" cy="149.6" r="1.6" fill="#5a5a5a"/>
<path d="M620.4 158.4 v4 l3 -2z" fill="#d8d8d8"/>
<path d="M629.8999999999999 157.4 H636.3 L633.0999999999999 163.8Z" fill="#3a2010" stroke="#d99a64" stroke-width="1.5" stroke-linejoin="round"/>
<text x="641.3" y="162.70000000000002" font-size="6.3" fill="#c9c9c9" text-anchor="start" >Crane_Details</text>
<g stroke="#2f9c7a" stroke-width="1.2" fill="none"><path d="M692.6 157.0 L699.4 157.0 L696 164.0Z"/><circle cx="692.6" cy="157.0" r="1" fill="#2f9c7a"/><circle cx="699.4" cy="157.0" r="1" fill="#2f9c7a"/><circle cx="696" cy="164.0" r="1" fill="#2f9c7a"/></g>
<path d="M724.5 160.4 q3.9 -4.4 7.8 0 q-3.9 4.4 -7.8 0z" fill="none" stroke="#e6e6e6" stroke-width="1.1"/><circle cx="728.4" cy="160.4" r="1.6" fill="#e6e6e6"/>
<path d="M735.9000000000001 158.0 h1.6 l0.8 -1.3 h2.8 l0.8 1.3 h1.6 v5.6 h-7.6z" fill="#e2e2e2"/><circle cx="739.7" cy="160.8" r="1.6" fill="#5a5a5a"/>
<path d="M620.4 169.6 v4 l3 -2z" fill="#d8d8d8"/>
<rect x="628.4999999999999" y="166.79999999999998" width="9.2" height="9.6" rx="1.2" fill="#7a8fb8"/><path d="M629.8999999999999 168.6 H636.3 L633.0999999999999 175.0Z" fill="#3a2010" stroke="#d08a7a" stroke-width="1.5" stroke-linejoin="round"/>
<text x="641.3" y="173.9" font-size="6.3" fill="#d6d6d6" text-anchor="start" >Crane_Pivot</text>
<g stroke="#3a98b4" stroke-width="1.2" fill="none"><path d="M687.8000000000001 168.2 L694.6 168.2 L691.2 175.2Z"/><circle cx="687.8000000000001" cy="168.2" r="1" fill="#3a98b4"/><circle cx="694.6" cy="168.2" r="1" fill="#3a98b4"/><circle cx="691.2" cy="175.2" r="1" fill="#3a98b4"/></g>
<path d="M724.5 171.6 q3.9 -4.4 7.8 0 q-3.9 4.4 -7.8 0z" fill="none" stroke="#e6e6e6" stroke-width="1.1"/><circle cx="728.4" cy="171.6" r="1.6" fill="#e6e6e6"/>
<path d="M735.9000000000001 169.2 h1.6 l0.8 -1.3 h2.8 l0.8 1.3 h1.6 v5.6 h-7.6z" fill="#e2e2e2"/><circle cx="739.7" cy="172.0" r="1.6" fill="#5a5a5a"/>
<path d="M620.4 180.79999999999998 v4 l3 -2z" fill="#d8d8d8"/>
<path d="M629.8999999999999 179.79999999999998 H636.3 L633.0999999999999 186.2Z" fill="#3a2010" stroke="#d99a64" stroke-width="1.5" stroke-linejoin="round"/>
<text x="641.3" y="185.1" font-size="6.3" fill="#c9c9c9" text-anchor="start" >Interior</text>
<g stroke="#2f9c7a" stroke-width="1.2" fill="none"><path d="M674.6 179.39999999999998 L681.4 179.39999999999998 L678 186.39999999999998Z"/><circle cx="674.6" cy="179.39999999999998" r="1" fill="#2f9c7a"/><circle cx="681.4" cy="179.39999999999998" r="1" fill="#2f9c7a"/><circle cx="678" cy="186.39999999999998" r="1" fill="#2f9c7a"/></g>
<path d="M724.5 182.79999999999998 q3.9 -4.4 7.8 0 q-3.9 4.4 -7.8 0z" fill="none" stroke="#e6e6e6" stroke-width="1.1"/><circle cx="728.4" cy="182.79999999999998" r="1.6" fill="#e6e6e6"/>
<path d="M735.9000000000001 180.39999999999998 h1.6 l0.8 -1.3 h2.8 l0.8 1.3 h1.6 v5.6 h-7.6z" fill="#e2e2e2"/><circle cx="739.7" cy="183.2" r="1.6" fill="#5a5a5a"/>
<path d="M620.4 192.0 v4 l3 -2z" fill="#d8d8d8"/>
<path d="M629.8999999999999 191.0 H636.3 L633.0999999999999 197.4Z" fill="#3a2010" stroke="#d99a64" stroke-width="1.5" stroke-linejoin="round"/>
<text x="641.3" y="196.3" font-size="6.3" fill="#c9c9c9" text-anchor="start" >Interior_Details</text>
<g stroke="#2f9c7a" stroke-width="1.2" fill="none"><path d="M697.4 190.6 L704.1999999999999 190.6 L700.8 197.6Z"/><circle cx="697.4" cy="190.6" r="1" fill="#2f9c7a"/><circle cx="704.1999999999999" cy="190.6" r="1" fill="#2f9c7a"/><circle cx="700.8" cy="197.6" r="1" fill="#2f9c7a"/></g>
<path d="M724.5 194.0 q3.9 -4.4 7.8 0 q-3.9 4.4 -7.8 0z" fill="none" stroke="#e6e6e6" stroke-width="1.1"/><circle cx="728.4" cy="194.0" r="1.6" fill="#e6e6e6"/>
<path d="M735.9000000000001 191.6 h1.6 l0.8 -1.3 h2.8 l0.8 1.3 h1.6 v5.6 h-7.6z" fill="#e2e2e2"/><circle cx="739.7" cy="194.4" r="1.6" fill="#5a5a5a"/>
<path d="M620.4 203.2 v4 l3 -2z" fill="#6a6a6a"/>
<path d="M632.8 205.79999999999998 V201.0 M632.8 205.79999999999998 L629.8999999999999 208.6 M632.8 205.79999999999998 L637.0999999999999 206.0" stroke="#7a6050" stroke-width="1.4" fill="none" stroke-linecap="round"/>
<text x="641.3" y="207.5" font-size="6.3" fill="#808080" text-anchor="start" >Jib_Pivot_Point</text>
<path d="M696.6 201.2 h3.2 l-3.2 5 h6.2 M701.2 204.39999999999998 l1.8 1.8 l-1.8 1.8" stroke="#6a6a6a" stroke-width="0.9" fill="none" stroke-linejoin="round"/>
<path d="M706.0 202.2 H712.4000000000001 L709.2 208.6Z" fill="#3a2010" stroke="#8a6a50" stroke-width="1.5" stroke-linejoin="round"/>
<path d="M725.0 204.79999999999998 q3.4 3.2 6.8 0" stroke="#8a8a8a" stroke-width="1" fill="none"/>
<path d="M735.9000000000001 202.79999999999998 h1.6 l0.8 -1.3 h2.8 l0.8 1.3 h1.6 v5.6 h-7.6z" fill="#e2e2e2"/><circle cx="739.7" cy="205.6" r="1.6" fill="#5a5a5a"/>
<path d="M620.4 214.4 v4 l3 -2z" fill="#6a6a6a"/>
<path d="M632.8 217.0 V212.20000000000002 M632.8 217.0 L629.8999999999999 219.8 M632.8 217.0 L637.0999999999999 217.20000000000002" stroke="#7a6050" stroke-width="1.4" fill="none" stroke-linecap="round"/>
<text x="641.3" y="218.70000000000002" font-size="6.3" fill="#808080" text-anchor="start" >Ram_Pivot_Point</text>
<path d="M701.4 212.4 h3.2 l-3.2 5 h6.2 M706.0 215.6 l1.8 1.8 l-1.8 1.8" stroke="#6a6a6a" stroke-width="0.9" fill="none" stroke-linejoin="round"/>
<path d="M725.0 216.0 q3.4 3.2 6.8 0" stroke="#8a8a8a" stroke-width="1" fill="none"/>
<path d="M735.9000000000001 214.0 h1.6 l0.8 -1.3 h2.8 l0.8 1.3 h1.6 v5.6 h-7.6z" fill="#e2e2e2"/><circle cx="739.7" cy="216.8" r="1.6" fill="#5a5a5a"/>
<path d="M620.4 225.6 v4 l3 -2z" fill="#d8d8d8"/>
<path d="M629.8999999999999 224.6 H636.3 L633.0999999999999 231.0Z" fill="#3a2010" stroke="#d99a64" stroke-width="1.5" stroke-linejoin="round"/>
<text x="641.3" y="229.9" font-size="6.3" fill="#c9c9c9" text-anchor="start" >Seat</text>
<g stroke="#2f9c7a" stroke-width="1.2" fill="none"><path d="M667.4 224.2 L674.1999999999999 224.2 L670.8 231.2Z"/><circle cx="667.4" cy="224.2" r="1" fill="#2f9c7a"/><circle cx="674.1999999999999" cy="224.2" r="1" fill="#2f9c7a"/><circle cx="670.8" cy="231.2" r="1" fill="#2f9c7a"/></g>
<path d="M681.3000000000001 228.2 V223.4 M681.3000000000001 228.2 L678.4 231.0 M681.3000000000001 228.2 L685.6 228.4" stroke="#dca070" stroke-width="1.4" fill="none" stroke-linecap="round"/>
<path d="M724.5 227.6 q3.9 -4.4 7.8 0 q-3.9 4.4 -7.8 0z" fill="none" stroke="#e6e6e6" stroke-width="1.1"/><circle cx="728.4" cy="227.6" r="1.6" fill="#e6e6e6"/>
<path d="M735.9000000000001 225.2 h1.6 l0.8 -1.3 h2.8 l0.8 1.3 h1.6 v5.6 h-7.6z" fill="#e2e2e2"/><circle cx="739.7" cy="228.0" r="1.6" fill="#5a5a5a"/>
<path d="M620.4 236.79999999999998 v4 l3 -2z" fill="#d8d8d8"/>
<path d="M629.8999999999999 235.79999999999998 H636.3 L633.0999999999999 242.2Z" fill="#3a2010" stroke="#d99a64" stroke-width="1.5" stroke-linejoin="round"/>
<text x="641.3" y="241.1" font-size="6.3" fill="#c9c9c9" text-anchor="start" >Windows</text>
<g stroke="#2f9c7a" stroke-width="1.2" fill="none"><path d="M679.4 235.39999999999998 L686.1999999999999 235.39999999999998 L682.8 242.39999999999998Z"/><circle cx="679.4" cy="235.39999999999998" r="1" fill="#2f9c7a"/><circle cx="686.1999999999999" cy="235.39999999999998" r="1" fill="#2f9c7a"/><circle cx="682.8" cy="242.39999999999998" r="1" fill="#2f9c7a"/></g>
<path d="M724.5 238.79999999999998 q3.9 -4.4 7.8 0 q-3.9 4.4 -7.8 0z" fill="none" stroke="#e6e6e6" stroke-width="1.1"/><circle cx="728.4" cy="238.79999999999998" r="1.6" fill="#e6e6e6"/>
<path d="M735.9000000000001 236.39999999999998 h1.6 l0.8 -1.3 h2.8 l0.8 1.3 h1.6 v5.6 h-7.6z" fill="#e2e2e2"/><circle cx="739.7" cy="239.2" r="1.6" fill="#5a5a5a"/>
<path d="M598.0 248.0 v4 l3 -2z" fill="#d8d8d8"/>
<path d="M607.4999999999999 247.0 H613.9 L610.6999999999999 253.4Z" fill="#3a2010" stroke="#d99a64" stroke-width="1.5" stroke-linejoin="round"/>
<text x="618.9" y="252.3" font-size="6.3" fill="#c9c9c9" text-anchor="start" >Buffers</text>
<g stroke="#2f9c7a" stroke-width="1.2" fill="none"><path d="M650.6 246.6 L657.4 246.6 L654 253.6Z"/><circle cx="650.6" cy="246.6" r="1" fill="#2f9c7a"/><circle cx="657.4" cy="246.6" r="1" fill="#2f9c7a"/><circle cx="654" cy="253.6" r="1" fill="#2f9c7a"/></g>
<path d="M724.5 250.0 q3.9 -4.4 7.8 0 q-3.9 4.4 -7.8 0z" fill="none" stroke="#e6e6e6" stroke-width="1.1"/><circle cx="728.4" cy="250.0" r="1.6" fill="#e6e6e6"/>
<path d="M735.9000000000001 247.6 h1.6 l0.8 -1.3 h2.8 l0.8 1.3 h1.6 v5.6 h-7.6z" fill="#e2e2e2"/><circle cx="739.7" cy="250.4" r="1.6" fill="#5a5a5a"/>
<path d="M598.0 259.2 v4 l3 -2z" fill="#d8d8d8"/>
<path d="M607.4999999999999 258.2 H613.9 L610.6999999999999 264.59999999999997Z" fill="#3a2010" stroke="#d99a64" stroke-width="1.5" stroke-linejoin="round"/>
<text x="618.9" y="263.5" font-size="6.3" fill="#c9c9c9" text-anchor="start" >Chassis</text>
<g stroke="#2f9c7a" stroke-width="1.2" fill="none"><path d="M653.0 257.8 L659.8 257.8 L656.4 264.8Z"/><circle cx="653.0" cy="257.8" r="1" fill="#2f9c7a"/><circle cx="659.8" cy="257.8" r="1" fill="#2f9c7a"/><circle cx="656.4" cy="264.8" r="1" fill="#2f9c7a"/></g>
<path d="M724.5 261.2 q3.9 -4.4 7.8 0 q-3.9 4.4 -7.8 0z" fill="none" stroke="#e6e6e6" stroke-width="1.1"/><circle cx="728.4" cy="261.2" r="1.6" fill="#e6e6e6"/>
<path d="M735.9000000000001 258.8 h1.6 l0.8 -1.3 h2.8 l0.8 1.3 h1.6 v5.6 h-7.6z" fill="#e2e2e2"/><circle cx="739.7" cy="261.59999999999997" r="1.6" fill="#5a5a5a"/>
<path d="M598.0 270.4 v4 l3 -2z" fill="#d8d8d8"/>
<path d="M607.4999999999999 269.4 H613.9 L610.6999999999999 275.79999999999995Z" fill="#3a2010" stroke="#d99a64" stroke-width="1.5" stroke-linejoin="round"/>
<text x="618.9" y="274.7" font-size="6.3" fill="#c9c9c9" text-anchor="start" >Chassis_Details</text>
<g stroke="#2f9c7a" stroke-width="1.2" fill="none"><path d="M675.8000000000001 269.0 L682.6 269.0 L679.2 276.0Z"/><circle cx="675.8000000000001" cy="269.0" r="1" fill="#2f9c7a"/><circle cx="682.6" cy="269.0" r="1" fill="#2f9c7a"/><circle cx="679.2" cy="276.0" r="1" fill="#2f9c7a"/></g>
<path d="M724.5 272.4 q3.9 -4.4 7.8 0 q-3.9 4.4 -7.8 0z" fill="none" stroke="#e6e6e6" stroke-width="1.1"/><circle cx="728.4" cy="272.4" r="1.6" fill="#e6e6e6"/>
<path d="M735.9000000000001 270.0 h1.6 l0.8 -1.3 h2.8 l0.8 1.3 h1.6 v5.6 h-7.6z" fill="#e2e2e2"/><circle cx="739.7" cy="272.79999999999995" r="1.6" fill="#5a5a5a"/>
<path d="M584.9 221.2 v8.8 l2 -1.9 l1.5 3.1 l1.2 -0.6 l-1.5 -3 h2.9z" fill="#ffffff" stroke="#0a0a0a" stroke-width="0.9" stroke-linejoin="round"/>
<rect x="572" y="361" width="178" height="2" fill="#161616"/>
<rect x="572" y="363" width="176.6" height="192" rx="3.5" fill="#303030"/>
<path d="M572 366.5 q0 -3.5 3.5 -3.5 H745.1 q3.5 0 3.5 3.5 V377.2 H572z" fill="#2f2f2f"/>
<rect x="572" y="377.2" width="15.3" height="173.8" fill="#1f1f1f"/>
<g><rect x="578.6" y="365" width="8" height="3.4" rx="1.7" fill="#e6e6e6"/><circle cx="584.8" cy="366.7" r="1.1" fill="#2a2a2a"/><rect x="578.6" y="369.6" width="8" height="3.4" rx="1.7" fill="#e6e6e6"/><circle cx="580.4" cy="371.3" r="1.1" fill="#2a2a2a"/></g>
<path d="M589.2 368.4 l1.5 1.5 l1.5 -1.5" stroke="#c8c8c8" stroke-width="0.8" fill="none"/>
<rect x="630.5" y="365" width="60" height="9.4" rx="2" fill="#1d1d1d"/>
<g fill="none" stroke="#d8d8d8" stroke-width="0.9"><circle cx="638" cy="368.8" r="2.2"/><line x1="636.4" y1="370.4" x2="633.8" y2="373"/></g>
<rect x="738.5" y="365.5" width="8" height="9" rx="1.5" fill="#232323"/><path d="M740.6 369.2 l1.5 1.5 l1.5 -1.5" stroke="#c8c8c8" stroke-width="0.8" fill="none"/>
<g><path d="M595.8 383.5 q-2.8 3.4 -2.8 5 a2.6 2.6 0 0 0 5.2 0 q0 -1.6 -2.4 -5z" fill="#d8d8d8"/><circle cx="598.8" cy="389.1" r="2.1" fill="#2d2d2d" stroke="#d8d8d8" stroke-width="0.9"/><circle cx="599.6" cy="384.1" r="0.9" fill="#d8d8d8"/></g>
<text x="606.8" y="389.6" font-size="6.4" fill="#cfcfcf" text-anchor="start" >Scene</text>
<path d="M633.8 385 l2 2.3 l-2 2.3" stroke="#cfcfcf" stroke-width="0.8" fill="none"/>
<circle cx="645.5" cy="387.3" r="3.9" fill="#2d2d2d" stroke="#dcdcdc" stroke-width="0.9"/><path d="M642.5 385.7 q1.4 -0.4 2.2 0.6 q0.6 1 -0.2 1.8 q-0.4 0.8 0 2.2 q-1.8 -0.8 -2.4 -3z" fill="#dcdcdc"/><path d="M645.7 383.7 q1.2 1 2.2 0.6 q1 0.8 0.8 2.2 q-1 0.6 -1.8 0 q-1.2 -0.6 -1.2 -2.8z" fill="#dcdcdc"/><path d="M646.3 388.5 q1.4 0 2 0.8 q-0.6 1.4 -2 1.8z" fill="#dcdcdc"/>
<text x="654.6" y="389.6" font-size="6.4" fill="#cfcfcf" text-anchor="start" >World</text>
<path d="M736 383.5 l4 4 M738 382.5 l3 3 l-1 1 l-3 -3z M736.5 387 l-2 2" stroke="#9a9a9a" stroke-width="0.9" fill="none"/>
<circle cx="598.5" cy="407.3" r="3.9" fill="#2d2d2d" stroke="#dcdcdc" stroke-width="0.9"/><path d="M595.5 405.7 q1.4 -0.4 2.2 0.6 q0.6 1 -0.2 1.8 q-0.4 0.8 0 2.2 q-1.8 -0.8 -2.4 -3z" fill="#dcdcdc"/><path d="M598.7 403.7 q1.2 1 2.2 0.6 q1 0.8 0.8 2.2 q-1 0.6 -1.8 0 q-1.2 -0.6 -1.2 -2.8z" fill="#dcdcdc"/><path d="M599.3 408.5 q1.4 0 2 0.8 q-0.6 1.4 -2 1.8z" fill="#dcdcdc"/>
<path d="M604.2 406.4 l1.5 1.5 l1.5 -1.5" stroke="#c8c8c8" stroke-width="0.8" fill="none"/>
<rect x="610.3" y="402.5" width="101" height="9.6" rx="1.5" fill="#1d1d1d"/>
<text x="613.8" y="409.6" font-size="6.4" fill="#d6d6d6" text-anchor="start" >World</text>
<rect x="711.3" y="402.5" width="34" height="9.6" rx="1.5" fill="#545454"/>
<rect x="711.3" y="402.5" width="3" height="9.6" fill="#545454"/>
<path d="M715.2 404.4 q2.6 1 5.2 0 v3.2 q-0.6 2.6 -2.6 3.4 q-2 -0.8 -2.6 -3.4z" fill="none" stroke="#9a9a9a" stroke-width="0.8"/>
<g fill="none" stroke="#d0d0d0" stroke-width="0.8"><rect x="726" y="405.6" width="5" height="5"/><path d="M727.5 405.6 V404.2 H732.4 V409.2 H731"/></g>
<g stroke="#d0d0d0" stroke-width="0.8"><line x1="739.4" y1="405" x2="743" y2="409.6"/><line x1="743" y1="405" x2="739.4" y2="409.6"/></g>
<rect x="592" y="418.5" width="153.2" height="13.8" rx="2" fill="#3b3b3b"/>
<path d="M599 423.1 l2.3 2.3 l-2.3 2.3" stroke="#cfcfcf" stroke-width="0.8" fill="none"/>
<text x="604.5" y="427.8" font-size="6.3" fill="#d0d0d0" text-anchor="start" >Surface</text>
<g stroke="#4a4a4a" stroke-width="0.6"><line x1="737" y1="424.1" x2="744" y2="424.1"/><line x1="737" y1="426.5" x2="744" y2="426.5"/></g>
<rect x="592" y="433.6" width="153.2" height="13.8" rx="2" fill="#3b3b3b"/>
<path d="M599 438.20000000000005 l2.3 2.3 l-2.3 2.3" stroke="#cfcfcf" stroke-width="0.8" fill="none"/>
<text x="604.5" y="442.90000000000003" font-size="6.3" fill="#d0d0d0" text-anchor="start" >Volume</text>
<g stroke="#4a4a4a" stroke-width="0.6"><line x1="737" y1="439.20000000000005" x2="744" y2="439.20000000000005"/><line x1="737" y1="441.6" x2="744" y2="441.6"/></g>
<rect x="592" y="448.7" width="153.2" height="13.8" rx="2" fill="#3b3b3b"/>
<path d="M599 453.3 l2.3 2.3 l-2.3 2.3" stroke="#cfcfcf" stroke-width="0.8" fill="none"/>
<text x="604.5" y="458.0" font-size="6.3" fill="#d0d0d0" text-anchor="start" >Viewport Display</text>
<g stroke="#4a4a4a" stroke-width="0.6"><line x1="737" y1="454.3" x2="744" y2="454.3"/><line x1="737" y1="456.7" x2="744" y2="456.7"/></g>
<rect x="592" y="463.8" width="153.2" height="13.8" rx="2" fill="#3b3b3b"/>
<path d="M599 468.40000000000003 l2.3 2.3 l-2.3 2.3" stroke="#cfcfcf" stroke-width="0.8" fill="none"/>
<text x="604.5" y="473.1" font-size="6.3" fill="#d0d0d0" text-anchor="start" >Custom Properties</text>
<g stroke="#4a4a4a" stroke-width="0.6"><line x1="737" y1="469.40000000000003" x2="744" y2="469.40000000000003"/><line x1="737" y1="471.8" x2="744" y2="471.8"/></g>
<rect x="572" y="463.4" width="15.3" height="15" fill="#3a3a3a"/>
<g fill="#d0d0d0"><circle cx="578" cy="391.5" r="1.2"/><rect x="577" y="387" width="2" height="4" /><path d="M581 386 l1.6 2.6 l1.6 -2.6 M582.6 388.6 v4.6" stroke="#d0d0d0" stroke-width="0.9" fill="none"/></g>
<g fill="none" stroke="#d0d0d0" stroke-width="0.9"><rect x="576.5" y="405.6" width="7.6" height="5.8"/><path d="M578.5 405.6 v-1.6 h3.6 v1.6 M576.5 408 h7.6"/></g>
<g fill="none" stroke="#d0d0d0" stroke-width="0.9"><rect x="576.5" y="421" width="7.6" height="3" fill="#d0d0d0"/><path d="M577.5 424 v3.5 h5.6 v-3.5"/></g>
<g fill="none" stroke="#d0d0d0" stroke-width="0.9"><rect x="577.5" y="437" width="6" height="6" rx="1"/><path d="M576.4 441.5 v2.5 h2.5"/></g>
<g><path d="M578.0 452.4 q-2.8 3.4 -2.8 5 a2.6 2.6 0 0 0 5.2 0 q0 -1.6 -2.4 -5z" fill="#d0d0d0"/><circle cx="581.0" cy="458.0" r="2.1" fill="#1f1f1f" stroke="#d0d0d0" stroke-width="0.9"/><circle cx="581.8000000000001" cy="453.0" r="0.9" fill="#d0d0d0"/></g>
<circle cx="579.8" cy="470.8" r="3.9" fill="#6a2a36" stroke="#d06a7a" stroke-width="0.9"/><path d="M576.8 469.2 q1.4 -0.4 2.2 0.6 q0.6 1 -0.2 1.8 q-0.4 0.8 0 2.2 q-1.8 -0.8 -2.4 -3z" fill="#e0b0b8"/><path d="M580.0 467.2 q1.2 1 2.2 0.6 q1 0.8 0.8 2.2 q-1 0.6 -1.8 0 q-1.2 -0.6 -1.2 -2.8z" fill="#e0b0b8"/>
<g fill="none" stroke="#8a8a8a" stroke-width="0.7"><path d="M576 490 v-2 h2 M581.4 488 h2 v2 M583.4 493.4 v2 h-2 M578 495.4 h-2 v-2"/></g><rect x="577" y="489" width="5.4" height="5.4" fill="#2a1a0a" stroke="#3a2410" stroke-width="0.6"/><rect x="577.9" y="489.9" width="3.6" height="3.6" fill="#e4b47a"/>
<path d="M576.6 511.4 l4.6 -4.6" stroke="#8aa6e6" stroke-width="1.9" stroke-linecap="round" fill="none"/><circle cx="582.2" cy="505.6" r="2.9" fill="#8aa6e6"/><path d="M582.4 505.4 l2.6 -2.6" stroke="#1f1f1f" stroke-width="1.7" stroke-linecap="butt"/>
<g fill="#8aa8e8"><circle cx="577" cy="520.8" r="1"/><circle cx="583" cy="526.4" r="0.8"/><circle cx="577" cy="526.4" r="0.7"/><circle cx="583" cy="520.8" r="0.7"/></g><line x1="577" y1="520.8" x2="583" y2="526.4" stroke="#8aa8e8" stroke-width="0.8"/>
<circle cx="579.6" cy="539.5" r="3.6" fill="none" stroke="#7a98d8" stroke-width="0.9"/><circle cx="579.6" cy="539.5" r="1.6" fill="#dfe6f6"/><circle cx="582.6" cy="536.5" r="0.9" fill="#dfe6f6"/>
</svg></body></html>
